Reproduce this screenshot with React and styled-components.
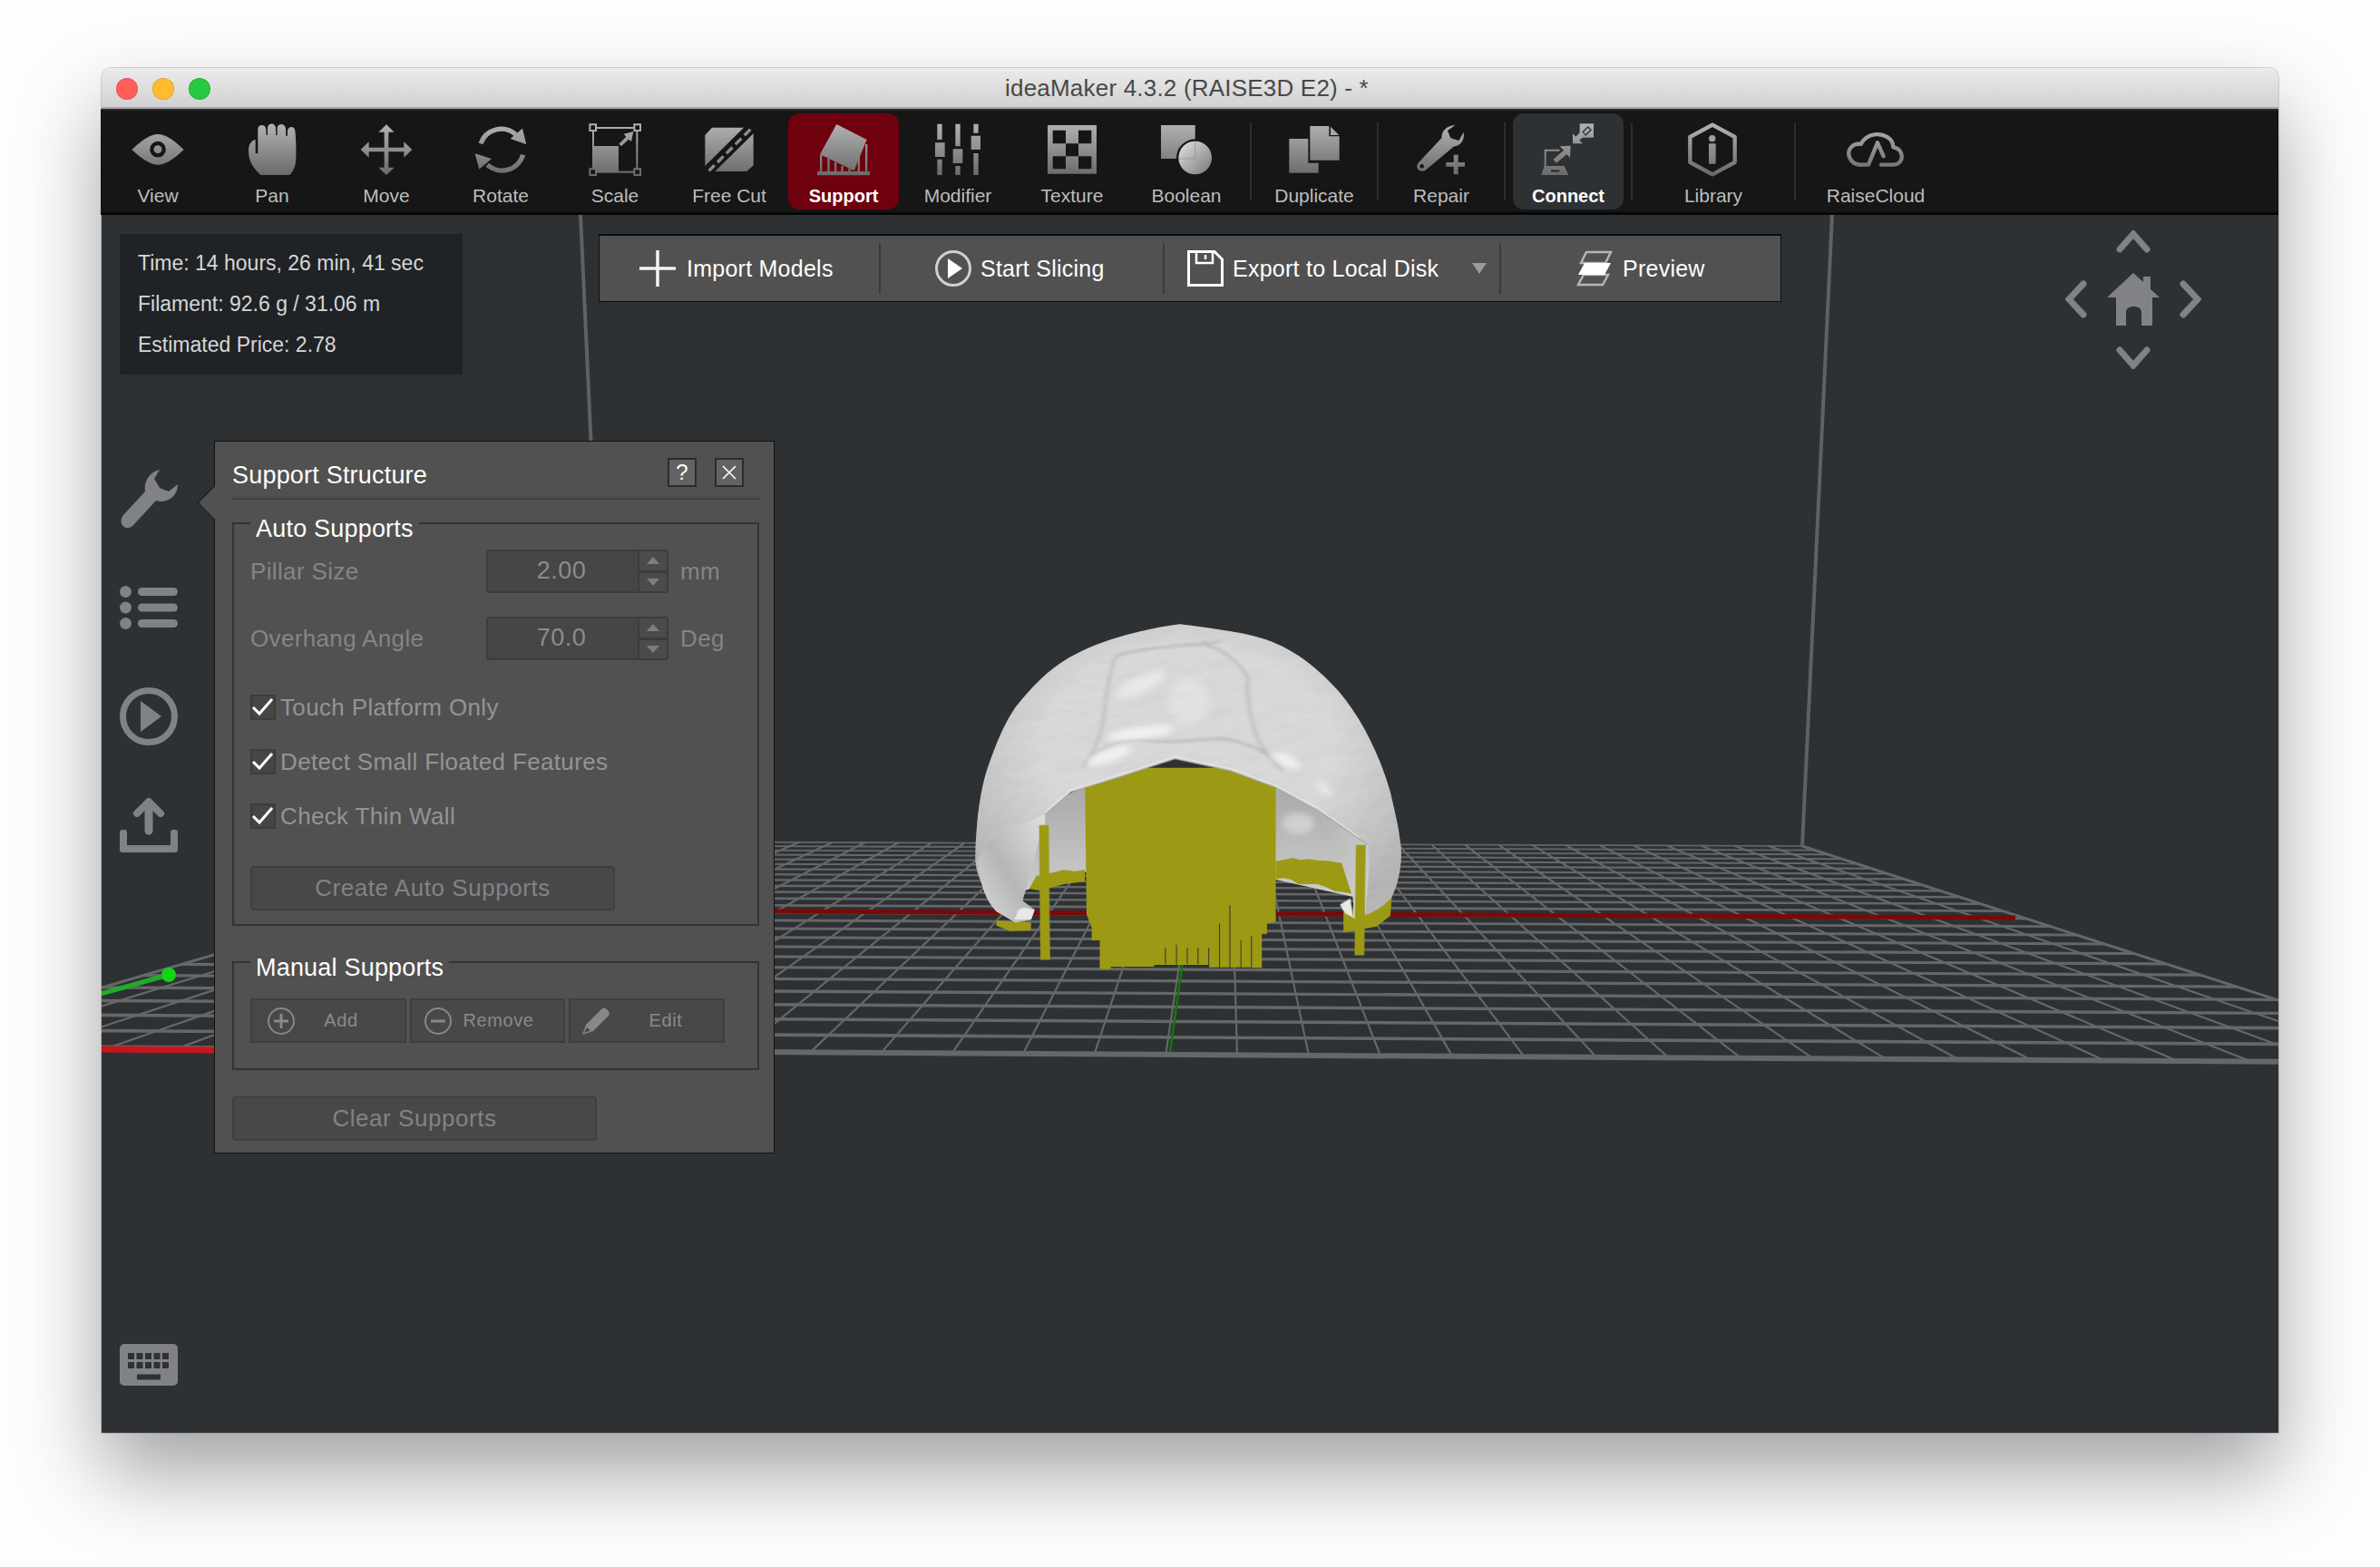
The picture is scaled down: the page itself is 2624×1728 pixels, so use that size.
import React from 'react'
import styled, { createGlobalStyle, css } from 'styled-components'

const FONT = `"Liberation Sans", Arial, sans-serif`

const GlobalStyle = createGlobalStyle`
  html, body { margin: 0; padding: 0; background: #fdfdfd; }
  body { width: 2624px; height: 1728px; overflow: hidden; font-family: ${FONT}; }
`

const Page = styled.div`
  padding: 75px 0 0 112px;
`

const Window = styled.div`
  width: 2400px;
  height: 1505px;
  display: flex;
  flex-direction: column;
  border-radius: 11px 11px 0 0;
  box-shadow: 0 0 0 1px rgba(90, 90, 90, 0.25), 0 44px 90px 0 rgba(0, 0, 0, 0.36);
`

const TitleBar = styled.div`
  height: 45px;
  flex: none;
  position: relative;
  display: flex;
  align-items: center;
  justify-content: center;
  padding: 2px 7px 0 0;
  border-radius: 11px 11px 0 0;
  border-bottom: 2px solid #a8a8a8;
  background: linear-gradient(#ebebeb, #d1d1d1);
  color: #484848;
  font-size: 26px;
  letter-spacing: 0.2px;
  box-sizing: border-box;
`

const Lights = styled.div`
  position: absolute;
  left: 16px;
  top: 11px;
  display: flex;
  gap: 16px;
`

const Light = styled.span`
  width: 24px;
  height: 24px;
  border-radius: 50%;
  background: ${p => p.$color};
  box-shadow: inset 0 0 0 1px rgba(0, 0, 0, 0.12);
`

const Toolbar = styled.div`
  height: 117px;
  flex: none;
  display: flex;
  align-items: center;
  box-sizing: border-box;
  margin-left: -1px;
  background: #161616;
  border-top: 2px solid #262626;
  border-bottom: 3px solid #060606;
`

const ToolCell = styled.div`
  width: ${p => p.$width}px;
  flex: none;
  display: flex;
  justify-content: center;
`

const ToolBtn = styled.div`
  width: 122px;
  height: 106px;
  box-sizing: border-box;
  padding-top: 10px;
  display: flex;
  flex-direction: column;
  align-items: center;
  border-radius: 12px;
  color: #bdbdbd;
  font-size: 21px;
  ${p => p.$tone === 'red' && css`
    background: #6f000e;
    color: #fff;
    font-size: 20px;
    font-weight: bold;
  `}
  ${p => p.$tone === 'dark' && css`
    background: #2e3134;
    color: #fff;
    font-size: 20px;
    font-weight: bold;
  `}
`

const ToolIcon = styled.svg`
  width: 64px;
  height: 60px;
  display: block;
`

const ToolLabel = styled.span`
  margin-top: 9px;
  line-height: 24px;
  white-space: nowrap;
`

const ToolSep = styled.div`
  width: 2px;
  height: 86px;
  flex: none;
  background: #2d2d2d;
  margin-left: ${p => p.$ml || 0}px;
`

const Viewport = styled.div`
  flex: 1;
  position: relative;
  overflow: hidden;
  background: #2e3134;
`

const Scene = styled.svg`
  position: absolute;
  inset: 0;
  width: 100%;
  height: 100%;
`

const InfoBox = styled.div`
  position: absolute;
  left: 20px;
  top: 21px;
  width: 378px;
  height: 155px;
  box-sizing: border-box;
  padding: 10px 0 0 20px;
  background: #202326;
  color: #d6d6d6;
  font-size: 23px;
`

const InfoLine = styled.div`
  height: 45px;
  line-height: 45px;
`

const ActionBar = styled.div`
  position: absolute;
  left: 548px;
  top: 21px;
  width: 1304px;
  height: 75px;
  box-sizing: border-box;
  display: flex;
  align-items: center;
  background: #515151;
  border: 1px solid #0c0c0c;
  border-top-width: 2px;
  color: #fff;
  font-size: 25px;
  letter-spacing: 0.25px;
`

const ActionCell = styled.div`
  width: ${p => p.$width}px;
  height: 56px;
  box-sizing: border-box;
  flex: none;
  display: flex;
  align-items: center;
  gap: ${p => p.$gap}px;
  padding-left: ${p => p.$pad}px;
  ${p => p.$sep && 'border-left: 2px solid #3a3a3a;'}
`

const ActionIcon = styled.svg`
  width: 40px;
  height: 40px;
  flex: none;
`

const DropArrow = styled.span`
  margin-left: auto;
  margin-right: 14px;
  width: 0;
  height: 0;
  border-left: 8px solid transparent;
  border-right: 8px solid transparent;
  border-top: 12px solid #9a9a9a;
`

const SideIcons = styled.div`
  position: absolute;
  left: 20px;
  top: 281px;
  display: flex;
  flex-direction: column;
  gap: 64px;
`

const SideIcon = styled.svg`
  display: block;
  width: 64px;
  height: ${p => p.$h}px;
  margin-top: ${p => p.$mt || 0}px;
  fill: #808285;
`

const KeyboardIcon = styled.svg`
  position: absolute;
  left: 20px;
  bottom: 52px;
  width: 64px;
  height: 46px;
  display: block;
`

const NavPad = styled.svg`
  position: absolute;
  left: 2165px;
  top: 17px;
  width: 150px;
  height: 153px;
`

const Panel = styled.div`
  position: absolute;
  left: 124px;
  top: 249px;
  width: 618px;
  height: 786px;
  box-sizing: border-box;
  padding: 0 14px 0 19px;
  background: #515151;
  border: 1px solid #101010;
  color: #fff;
  font-size: 26px;

  &::before {
    content: '';
    position: absolute;
    left: -14px;
    top: 54px;
    width: 26px;
    height: 26px;
    background: #515151;
    border-left: 1px solid #101010;
    border-bottom: 1px solid #101010;
    transform: rotate(45deg);
  }
`

const PanelHeader = styled.div`
  height: 64px;
  box-sizing: border-box;
  padding: 6px 19px 0 0;
  display: flex;
  align-items: center;
  gap: 20px;
  border-bottom: 2px solid #404040;
`

const PanelTitle = styled.span`
  margin: 6px auto 0 0;
  font-size: 27px;
  letter-spacing: 0.2px;
`

const HeadBtn = styled.span`
  width: 32px;
  height: 32px;
  box-sizing: border-box;
  display: flex;
  align-items: center;
  justify-content: center;
  border: 2px solid #2c2c2c;
  background: #636363;
  font-size: 24px;
`

const Group = styled.div`
  position: relative;
  width: 581px;
  height: ${p => p.$h}px;
  margin-top: ${p => p.$mt}px;
  box-sizing: border-box;
  padding: ${p => p.$pt}px 0 0 18px;
  border: 2px solid #333;
`

const Legend = styled.span`
  position: absolute;
  left: 18px;
  top: -9px;
  padding: 0 6px;
  line-height: 28px;
  background: #515151;
  font-size: 27px;
  letter-spacing: 0.2px;
  white-space: nowrap;
`

const FieldRow = styled.div`
  height: 48px;
  display: flex;
  align-items: center;
  margin-bottom: 26px;
  color: #858585;
  letter-spacing: 0.35px;
`

const FieldLabel = styled.span`
  width: 260px;
  flex: none;
`

const SpinBox = styled.div`
  width: 201px;
  height: 48px;
  box-sizing: border-box;
  display: flex;
  background: #464646;
  border: 2px solid #3c3c3c;
  border-radius: 4px;
  color: #8c8c8c;
  font-size: 27px;
  letter-spacing: 0.5px;
`

const SpinValue = styled.span`
  flex: 1;
  padding-right: 3px;
  text-align: center;
  line-height: 42px;
`

const SpinArrows = styled.div`
  width: 30px;
  display: flex;
  flex-direction: column;
  border-left: 2px solid #3c3c3c;
`

const SpinArrow = styled.span`
  flex: 1;
  display: flex;
  align-items: center;
  justify-content: center;
  background: #4b4b4b;
  & + & { border-top: 3px solid #3c3c3c; }

  &::after {
    content: '';
    border-left: 7px solid transparent;
    border-right: 7px solid transparent;
    ${p => p.$down ? 'border-top: 8px solid #7e7e7e;' : 'border-bottom: 8px solid #7e7e7e;'}
  }
`

const Unit = styled.span`
  margin-left: 13px;
`

const CheckRow = styled.div`
  height: 28px;
  display: flex;
  align-items: center;
  gap: 5px;
  margin-top: ${p => p.$mt}px;
  color: #949494;
  letter-spacing: 0.35px;
`

const CheckBox = styled.span`
  width: 28px;
  height: 28px;
  box-sizing: border-box;
  flex: none;
  background: #464646;
  border: 2px solid #3c3c3c;
  display: flex;
  align-items: center;
  justify-content: center;
`

const DimButton = styled.div`
  width: ${p => p.$w}px;
  height: 49px;
  box-sizing: border-box;
  margin-top: ${p => p.$mt}px;
  display: flex;
  align-items: center;
  justify-content: center;
  background: #484848;
  border: 2px solid #3e3e3e;
  border-radius: 4px;
  color: #838383;
  letter-spacing: 0.55px;
`

const ManualRow = styled.div`
  display: flex;
  gap: 4px;
`

const ManualBtn = styled.div`
  width: ${p => p.$w}px;
  height: 49px;
  box-sizing: border-box;
  display: flex;
  align-items: center;
  padding: 0 ${p => p.$pr}px 0 ${p => p.$pl}px;
  background: #484848;
  border: 2px solid #3e3e3e;
  color: #8a8a8a;
  font-size: 20px;
  letter-spacing: 0.6px;
`

const ManualText = styled.span`
  flex: 1;
  text-align: center;
`

const ManualIcon = styled.svg`
  width: 32px;
  height: 32px;
  flex: none;
`

const G = 'url(#toolGrad)'

const Eye = () => (
  <>
    <path fill={G} d="M46 108C85 72 110 57 132 57C155 57 180 72 218 108C180 144 155 158 132 158C110 158 85 144 46 108Z" />
    <circle cx="132" cy="107" r="20" fill="none" stroke="#161616" strokeWidth="13" />
  </>
)
const Hand = () => (
  <path fill={G} d="M472 192C450 170 432 150 432 110C432 90 442 78 455 75L455 120L463 120L463 40C463 23 488 23 490 40L491 60L495 60L495 35C497 18 520 18 522 35L523 60L527 60L527 35C530 20 553 20 555 38L556 62L561 62L561 45C564 29 584 29 586 45C590 80 590 130 588 150C585 170 578 182 568 192Z" />
)
const Move = () => (
  <path fill={G} d="M888 25L914 50L895 50L895 101L946 101L946 82L973 108L946 134L946 115L895 115L895 167L914 167L888 192L862 167L881 167L881 115L830 115L830 134L803 108L830 82L830 101L881 101L881 50L862 50Z" />
)
const Rotate = () => (
  <>
    <path fill="none" stroke={G} strokeWidth="16" d="M1200 88A72 72 0 0 1 1316 58M1340 125A72 72 0 0 1 1222 158" />
    <path fill={G} d="M1338 38L1351 91L1298 72ZM1181 121L1236 138L1195 173Z" />
  </>
)
const Scale = () => (
  <>
    <rect x="72" y="36" width="145" height="146" fill="none" stroke={G} strokeWidth="6" />
    <rect x="72" y="96" width="84" height="84" fill={G} />
    <path fill="#161616" stroke={G} strokeWidth="6" d="M61 25h20v20h-20zM208 25h20v20h-20zM61 172h20v20h-20zM208 172h20v20h-20z" />
    <path fill={G} d="M205 48L198 82L189 74L165 97L157 89L181 65L173 56Z" />
  </>
)
const FreeCut = () => (
  <>
    <path fill={G} d="M442 60L465 35L570 35L442 162ZM602 55L602 160L580 180L475 180Z" />
    <path fill="none" stroke="#8c8c8c" strokeWidth="10" strokeDasharray="28 14" d="M592 41L455 178" />
  </>
)
const Support = () => (
  <>
    <path fill={G} d="M877 24L977 75L935 178L822 124Z" />
    <path fill={G} d="M813 180H987V193H813ZM822 126h7v55h-7zM847 138h7v43h-7zM870 150h7v31h-7zM892 162h7v19h-7zM916 170h7v11h-7zM947 130h7v51h-7zM972 90h7v91h-7z" />
  </>
)
const Modifier = () => (
  <path fill={G} d="M1210 23h16v52h-16zM1203 85h32v47h-32zM1210 140h16v52h-16zM1270 23h16v74h-16zM1262 106h32v47h-32zM1270 162h16v30h-16zM1330 23h16v30h-16zM1322 62h31v46h-31zM1330 120h16v72h-16z" />
)
const Texture = () => (
  <path fill={G} fillRule="evenodd" d="M75 27H237V188H75ZM92 44V88H135V44ZM177 44V88H220V44ZM135 88V130H177V88ZM92 130V172H135V130ZM177 130V172H220V130Z" />
)
const Boolean3D = () => (
  <>
    <rect x="450" y="27" width="113" height="111" fill={G} />
    <circle cx="563" cy="135" r="62" fill="#161616" />
    <circle cx="563" cy="135" r="55" fill="url(#sphereGrad)" />
    <path fill="none" stroke="#6a6a6a" strokeWidth="2" strokeDasharray="4 3" d="M563 82V138H510" />
  </>
)
const Duplicate = () => (
  <>
    <path fill={G} d="M874 72L937 72L937 152L971 152L971 185L874 185Z" />
    <path fill={G} d="M943 30L1006 30L1006 64L1040 64L1040 143L943 143Z" />
    <path fill="#a8a8a8" d="M1011 32L1039 60L1011 60Z" />
  </>
)
const Repair = () => (
  <>
    <path fill={G} fillRule="evenodd" d="M1303 150L1378 70C1378 45 1393 30 1423 27L1398 45L1408 70L1435 78L1451 50C1455 75 1443 95 1418 98L1323 178C1303 185 1288 165 1303 150ZM1313 156a7 7 0 1 0 .1 0Z" />
    <path fill={G} d="M1418 125h15v25h22v14h-22v26h-15v-26h-25v-14h25z" />
  </>
)
const Connect = () => (
  <>
    <rect x="335" y="22" width="46" height="46" fill={G} />
    <path fill="none" stroke="#2e3134" strokeWidth="4" d="M345 50L362 33L372 43L355 60Z" />
    <path fill={G} d="M312 88L312 55L322 65L340 47L352 59L334 78L345 88Z" />
    <path fill="none" stroke={G} strokeWidth="6" d="M268 110H221V165" />
    <path fill={G} d="M218 162H284L298 192H208ZM305 95L303 135L292 124L258 152L247 141L282 110L269 97Z" />
    <path fill="#2e3134" d="M240 175h28v7h-28z" />
  </>
)
const Library = () => (
  <>
    <path fill="none" stroke={G} strokeWidth="13" strokeLinejoin="round" d="M774 26L848 66V150L774 190L700 150V66Z" />
    <circle cx="773" cy="71" r="11" fill={G} />
    <rect x="762" y="88" width="23" height="67" rx="3" fill={G} />
  </>
)
const Cloud = () => (
  <path fill="none" stroke={G} strokeWidth="13" strokeLinecap="round" strokeLinejoin="round" d="M1332 158L1372 158C1410 158 1410 105 1372 100C1372 70 1340 55 1310 58C1290 60 1272 75 1265 90C1240 85 1222 105 1225 125C1228 145 1245 160 1270 158L1290 158L1320 85L1340 130" />
)

const TOOLS = [
  { label: 'View', vx: 36, Icon: Eye, width: 126 },
  { label: 'Pan', vx: 414, Icon: Hand, width: 126 },
  { label: 'Move', vx: 792, Icon: Move, width: 126 },
  { label: 'Rotate', vx: 1170, Icon: Rotate, width: 126 },
  { label: 'Scale', vx: 48, Icon: Scale, width: 126 },
  { label: 'Free Cut', vx: 426, Icon: FreeCut, width: 126 },
  { label: 'Support', vx: 804, Icon: Support, width: 126, tone: 'red' },
  { label: 'Modifier', vx: 1182, Icon: Modifier, width: 126 },
  { label: 'Texture', vx: 60, Icon: Texture, width: 126 },
  { label: 'Boolean', vx: 438, Icon: Boolean3D, width: 126 },
  { sep: true, ml: 7 },
  { label: 'Duplicate', vx: 861, Icon: Duplicate, width: 138 },
  { sep: true },
  { label: 'Repair', vx: 1281, Icon: Repair, width: 138 },
  { sep: true },
  { label: 'Connect', vx: 201, Icon: Connect, width: 138, tone: 'dark' },
  { sep: true },
  { label: 'Library', vx: 681, Icon: Library, width: 178 },
  { sep: true },
  { label: 'RaiseCloud', vx: 1218, Icon: Cloud, width: 176 },
]

// perspective of the print bed: unit square -> floor corners
const makeProject = ([[x0, y0], [x1, y1], [x2, y2], [x3, y3]]) => {
  const dx1 = x1 - x2, dx2 = x3 - x2, sx = x0 - x1 + x2 - x3
  const dy1 = y1 - y2, dy2 = y3 - y2, sy = y0 - y1 + y2 - y3
  const den = dx1 * dy2 - dx2 * dy1
  const g = (sx * dy2 - dx2 * sy) / den
  const h = (dx1 * sy - sx * dy1) / den
  const a = x1 - x0 + g * x1, b = x3 - x0 + h * x3
  const d = y1 - y0 + g * y1, e = y3 - y0 + h * y3
  return (u, v) => {
    const w = g * u + h * v + 1
    return [(a * u + b * v + x0) / w, (d * u + e * v + y0) / w]
  }
}

const project = makeProject([[663, 928], [1987, 933], [2725, 1172], [-110, 1154]])
const COLS = 36
const ROWS = 25

const FloorGrid = () => {
  const lines = []
  for (let i = 0; i <= COLS; i++) {
    const [ax, ay] = project(i / COLS, 0)
    const [bx, by] = project(i / COLS, 1)
    lines.push(<line key={'c' + i} x1={ax} y1={ay} x2={bx} y2={by} strokeWidth={i === 0 || i === COLS ? 3 : 2.2} />)
  }
  for (let j = 0; j <= ROWS; j++) {
    const v = j / ROWS
    const [ax, ay] = project(0, v)
    const [bx, by] = project(1, v)
    const sw = j === ROWS ? 6 : 1.7 + v * 2
    lines.push(<line key={'r' + j} x1={ax} y1={ay} x2={bx} y2={by} strokeWidth={sw} />)
  }
  return <g stroke="#656768">{lines}</g>
}

const SHELL = 'M735 85C800 95 900 110 950 125C1040 150 1120 215 1190 305C1260 400 1310 520 1340 640C1352 700 1365 760 1368 800C1378 860 1365 940 1345 985C1325 1020 1280 1045 1240 1060L1232 1055C1240 1000 1225 930 1215 900C1205 860 1170 760 1130 700L1010 625L880 570L780 545L720 530L560 590L420 640L345 715L345 745C325 800 310 870 300 925L280 1000L315 1030L305 1062L260 1072L205 1035C185 1010 170 975 165 950C150 910 143 880 145 850C145 810 148 770 150 740C155 680 165 610 180 560C205 480 225 420 260 360C295 310 330 265 370 230C410 195 455 170 500 150C570 120 660 95 735 85Z'
const LEFT_FLAP = 'M150 870C165 820 200 785 250 760C290 742 325 725 345 715L345 745C325 800 310 870 300 925L280 1000L315 1030L305 1062L260 1072L205 1035C185 1010 170 975 165 950Z'
const RIGHT_FLAP = 'M1130 700C1180 735 1240 780 1272 812C1285 850 1275 960 1268 1040L1240 1060L1232 1055C1240 1000 1225 930 1215 900C1205 860 1170 760 1130 700Z'
const BLOCK = 'M460 560L1010 560V1070L985 1075V1110L970 1110V1222H940V1220H818V1212H660V1218H535V1226H503V1130H480V1090L465 1045Z'
const BANDS = 'M300 960L320 918L360 908L400 898L430 902L460 898V936L400 945L330 966ZM1010 870L1030 865L1060 858L1080 865L1105 862L1130 866L1160 868L1200 875L1228 976L1205 972L1180 968L1155 955L1130 945L1100 945L1075 945L1055 930L1030 925L1010 928ZM205 1065L305 1072V1098L245 1100L205 1082ZM1205 1040L1345 985L1340 1050L1300 1085L1205 1105Z'
const GAPS = [[692, 1155, 1210], [724, 1145, 1210], [755, 1155, 1210], [786, 1155, 1210], [817, 1155, 1212], [848, 1075, 1222], [878, 1015, 1222], [910, 1130, 1222], [940, 1115, 1222]]

const Skull = () => (
  <g transform="translate(1020 660) scale(0.3827 0.3333)">
    <path fill="url(#innerGrad)" d="M275 970L300 800L340 690L460 620L1010 610L1135 680L1245 900V990L1010 930L460 905Z" />
    <ellipse cx="1075" cy="745" rx="45" ry="35" fill="#d0d0d0" filter="url(#softer)" />
    <path fill="#9c9a14" d={BANDS} />
    <path fill="#9c9a14" d={BLOCK} />
    {GAPS.map(([x, y1, y2]) => <line key={x} x1={x} x2={x} y1={y1} y2={y2} stroke="#3f4030" strokeWidth="3" />)}
    <path fill="#dcdcdc" d={SHELL} filter="url(#bump)" />
    <path fill="url(#shellShade)" d={SHELL} />
    <path fill="url(#flapLeft)" d={LEFT_FLAP} />
    <path fill="url(#flapRight)" d={RIGHT_FLAP} />
    <g fill="none" stroke="#b2b2b2" strokeWidth="6" filter="url(#soft)">
      <path d="M550 190C530 240 525 300 520 340C515 400 510 470 455 560" />
      <path d="M930 262C925 320 935 400 960 470C980 510 1000 540 1030 570" />
      <path d="M550 190C600 170 680 160 800 150C850 165 905 205 930 262" />
      <path d="M460 545C500 490 560 470 620 468C700 480 770 470 850 462C900 470 950 490 985 515" />
      <path d="M800 140C810 150 830 150 850 140" />
    </g>
    <g fill="#f6f6f6" filter="url(#softer)">
      <ellipse cx="620" cy="285" rx="80" ry="26" transform="rotate(-30 620 285)" opacity=".55" />
      <ellipse cx="620" cy="445" rx="100" ry="20" transform="rotate(-8 620 445)" opacity=".85" />
      <ellipse cx="530" cy="520" rx="70" ry="22" transform="rotate(-22 530 520)" opacity=".8" />
      <ellipse cx="1040" cy="535" rx="45" ry="18" transform="rotate(30 1040 535)" opacity=".8" />
      <ellipse cx="760" cy="340" rx="60" ry="80" opacity=".3" />
      <ellipse cx="1150" cy="630" rx="30" ry="14" transform="rotate(40 1150 630)" opacity=".55" />
    </g>
    <path fill="none" stroke="#a2a2a2" strokeWidth="3" d="M345 715L420 640L560 590L720 530L780 545L880 570L1010 625L1130 700L1272 812" />
    <path fill="none" stroke="#ececec" strokeWidth="3" d="M345 708L420 633L560 583L720 524L780 538L880 563L1010 618L1130 693L1250 790" />
    <path fill="#e8e8e8" d="M285 1022L315 1030L305 1062L258 1062L268 1030ZM1195 1012L1225 992L1232 1055L1208 1040Z" />
    <path fill="#9c9a14" d="M328 750H356L360 1195H332ZM1241 815H1269L1265 1180H1237Z" />
  </g>
)

const SceneDefs = () => (
  <defs>
    <linearGradient id="innerGrad" x1="0" y1="0" x2="0" y2="1">
      <stop offset="0" stopColor="#a8a8a8" />
      <stop offset="1" stopColor="#cdcdcd" />
    </linearGradient>
    <linearGradient id="flapLeft" x1="1" y1="0" x2="0" y2="1">
      <stop offset="0" stopColor="#e0e0e0" />
      <stop offset=".55" stopColor="#b6b6b6" />
      <stop offset="1" stopColor="#dcdcdc" />
    </linearGradient>
    <linearGradient id="flapRight" x1="0" y1="0" x2="1" y2="1">
      <stop offset="0" stopColor="#b0b0b0" />
      <stop offset="1" stopColor="#d4d4d4" />
    </linearGradient>
    <radialGradient id="shellShade" cx=".5" cy=".42" r=".62">
      <stop offset=".55" stopColor="#000" stopOpacity="0" />
      <stop offset="1" stopColor="#000" stopOpacity=".16" />
    </radialGradient>
    <filter id="soft" x="-30%" y="-30%" width="160%" height="160%">
      <feGaussianBlur stdDeviation="5" />
    </filter>
    <filter id="softer" x="-40%" y="-40%" width="180%" height="180%">
      <feGaussianBlur stdDeviation="10" />
    </filter>
    <filter id="bump" x="0" y="0" width="100%" height="100%">
      <feTurbulence type="fractalNoise" baseFrequency="0.012 0.018" numOctaves="3" seed="7" result="n" />
      <feDiffuseLighting in="n" surfaceScale="2.4" lightingColor="#fff" result="l">
        <feDistantLight azimuth="240" elevation="72" />
      </feDiffuseLighting>
      <feBlend in="SourceGraphic" in2="l" mode="multiply" result="m" />
      <feComposite in="m" in2="SourceAlpha" operator="in" />
    </filter>
  </defs>
)

const Check = () => (
  <svg width="28" height="22" viewBox="0 0 28 22" style={{ overflow: 'visible' }}>
    <path d="M3 11L10 18L24 2" fill="none" stroke="#fff" strokeWidth="3" />
  </svg>
)

const Field = ({ label, value, unit }) => (
  <FieldRow>
    <FieldLabel>{label}</FieldLabel>
    <SpinBox>
      <SpinValue>{value}</SpinValue>
      <SpinArrows>
        <SpinArrow />
        <SpinArrow $down />
      </SpinArrows>
    </SpinBox>
    <Unit>{unit}</Unit>
  </FieldRow>
)

const CheckItem = ({ label, mt }) => (
  <CheckRow $mt={mt}>
    <CheckBox><Check /></CheckBox>
    {label}
  </CheckRow>
)

export default function App() {
  return (
    <Page>
      <GlobalStyle />
      <svg width="0" height="0" style={{ position: 'absolute' }}>
        <defs>
          <linearGradient id="toolGrad" gradientUnits="userSpaceOnUse" x1="0" y1="18" x2="0" y2="198">
            <stop offset="0" stopColor="#b4b4b4" />
            <stop offset="1" stopColor="#686868" />
          </linearGradient>
          <linearGradient id="sphereGrad" x1="0" y1="0" x2="1" y2="1">
            <stop offset="0" stopColor="#e4e4e4" />
            <stop offset="1" stopColor="#777" />
          </linearGradient>
        </defs>
      </svg>
      <Window>
        <TitleBar>
          <Lights>
            <Light $color="#ff5f57" />
            <Light $color="#febc2e" />
            <Light $color="#28c840" />
          </Lights>
          ideaMaker 4.3.2 (RAISE3D E2) - *
        </TitleBar>
        <Toolbar>
          {TOOLS.map((t, i) => t.sep ? <ToolSep key={i} $ml={t.ml} /> : (
            <ToolCell key={t.label} $width={t.width}>
              <ToolBtn $tone={t.tone}>
                <ToolIcon viewBox={`${t.vx} 18 192 180`}><t.Icon /></ToolIcon>
                <ToolLabel>{t.label}</ToolLabel>
              </ToolBtn>
            </ToolCell>
          ))}
        </Toolbar>
        <Viewport>
          <Scene viewBox="112 237 2400 1343" preserveAspectRatio="none">
            <SceneDefs />
            <FloorGrid />
            <line x1="640" y1="237" x2="672" y2="928" stroke="#5f6162" strokeWidth="4" />
            <line x1="2020" y1="237" x2="1987" y2="933" stroke="#5f6162" strokeWidth="4" />
            <line x1="854" y1="1005" x2="2222" y2="1012" stroke="#7d0808" strokeWidth="5" />
            <line x1="1290" y1="1160" x2="1304" y2="1060" stroke="#0d7a0d" strokeWidth="2.5" />
            <line x1="111" y1="1157" x2="240" y2="1158" stroke="#c8161c" strokeWidth="7" />
            <line x1="111" y1="1096" x2="186" y2="1075" stroke="#1fae2a" strokeWidth="5" />
            <circle cx="186" cy="1075" r="8" fill="#14d414" />
            <Skull />
          </Scene>

          <InfoBox>
            <InfoLine>Time: 14 hours, 26 min, 41 sec</InfoLine>
            <InfoLine>Filament: 92.6 g / 31.06 m</InfoLine>
            <InfoLine>Estimated Price: 2.78</InfoLine>
          </InfoBox>

          <ActionBar>
            <ActionCell $width={308} $pad={44} $gap={12}>
              <ActionIcon viewBox="0 0 40 40">
                <path d="M20 0V40M0 20H40" stroke="#f4f4f4" strokeWidth="3.5" />
              </ActionIcon>
              Import Models
            </ActionCell>
            <ActionCell $sep $width={313} $pad={60} $gap={10}>
              <ActionIcon viewBox="0 0 40 40">
                <circle cx="20" cy="20" r="18.5" fill="none" stroke="#d0d0d0" strokeWidth="3" />
                <path d="M14 9L30 20L14 31Z" fill="#fff" />
              </ActionIcon>
              Start Slicing
            </ActionCell>
            <ActionCell $sep $width={371} $pad={25} $gap={10}>
              <ActionIcon viewBox="0 0 40 40">
                <path d="M1.5 1.5H30L38.5 10V38.5H1.5Z" fill="none" stroke="#fff" strokeWidth="3" />
                <path d="M10 2V14H28V2M20 5V10" fill="none" stroke="#fff" strokeWidth="2.5" />
              </ActionIcon>
              Export to Local Disk
              <DropArrow />
            </ActionCell>
            <ActionCell $sep $width={309} $pad={83} $gap={11}>
              <ActionIcon viewBox="0 0 40 40">
                <path d="M11 2H38L32 14H5ZM8 27H35L29 38H2Z" fill="none" stroke="#b5b5b5" strokeWidth="2.5" />
                <path d="M9 14H38L31 27H2Z" fill="#fff" />
              </ActionIcon>
              Preview
            </ActionCell>
          </ActionBar>

          <SideIcons>
            <SideIcon $h={64} viewBox="0 0 64 64">
              <path d="M44 0C34 2 26 12 28 24L4 50C-1 56 2 64 9 64C12 64 14 62 16 60L40 34C54 38 64 28 64 16L54 24L44 20L38 10Z" />
            </SideIcon>
            <SideIcon $h={48} viewBox="0 0 64 48">
              <circle cx="6.5" cy="6.5" r="6.5" />
              <circle cx="6.5" cy="24" r="6.5" />
              <circle cx="6.5" cy="41.5" r="6.5" />
              <rect x="20" y="2" width="44" height="9" rx="4.5" />
              <rect x="20" y="19.5" width="44" height="9" rx="4.5" />
              <rect x="20" y="37" width="44" height="9" rx="4.5" />
            </SideIcon>
            <SideIcon $h={64} viewBox="0 0 64 64">
              <circle cx="32" cy="32" r="28.5" fill="none" stroke="#808285" strokeWidth="7" />
              <path d="M23 15L46 32L23 49Z" />
            </SideIcon>
            <SideIcon $h={60} $mt={-6} viewBox="0 0 64 60">
              <path d="M32 6V36" stroke="#808285" strokeWidth="9" strokeLinecap="round" fill="none" />
              <path d="M19 17L32 4L45 17" stroke="#808285" strokeWidth="8" strokeLinecap="round" strokeLinejoin="round" fill="none" />
              <path d="M0 38C0 36 1 35 3 35H6C7 35 8 36 8 38V52H56V38C56 36 57 35 59 35H61C63 35 64 36 64 38V57C64 59 63 60 61 60H3C1 60 0 59 0 57Z" />
            </SideIcon>
          </SideIcons>

          <KeyboardIcon viewBox="0 0 64 46">
            <rect width="64" height="46" rx="5" fill="#808285" />
            <path fill="#2e3134" d="M9 10h7v7H9zM18.500 10h7v7h-7zM28 10h7v7h-7zM37.500 10h7v7h-7zM47 10h7v7h-7zM9 20h7v7H9zM18.500 20h7v7h-7zM28 20h7v7h-7zM37.500 20h7v7h-7zM47 20h7v7h-7zM19 33.500h26v6H19z" />
          </KeyboardIcon>

          <NavPad viewBox="0 0 150 153">
            <path fill="none" stroke="#808285" strokeWidth="7" strokeLinecap="round" strokeLinejoin="miter" d="M60 21L75 4L90 21M20 59L4 76L20 93M130 59L146 76L130 93M60 132L75 149L90 132" />
            <path fill="#808285" d="M75 47L86 57V51H94V65L104 74H96V105H84V90C84 82 67 82 67 90V105H56V74H46Z" />
          </NavPad>

          <Panel>
            <PanelHeader>
              <PanelTitle>Support Structure</PanelTitle>
              <HeadBtn>?</HeadBtn>
              <HeadBtn>
                <svg width="18" height="18" viewBox="0 0 18 18">
                  <path d="M2 2L16 16M16 2L2 16" stroke="#fff" strokeWidth="1.6" />
                </svg>
              </HeadBtn>
            </PanelHeader>

            <Group $h={445} $mt={25} $pt={28}>
              <Legend>Auto Supports</Legend>
              <Field label="Pillar Size" value="2.00" unit="mm" />
              <Field label="Overhang Angle" value="70.0" unit="Deg" />
              <CheckItem label="Touch Platform Only" mt={38} />
              <CheckItem label="Detect Small Floated Features" mt={32} />
              <CheckItem label="Check Thin Wall" mt={32} />
              <DimButton $w={402} $mt={41}>Create Auto Supports</DimButton>
            </Group>

            <Group $h={120} $mt={39} $pt={39}>
              <Legend>Manual Supports</Legend>
              <ManualRow>
                <ManualBtn $w={172} $pl={16} $pr={20}>
                  <ManualIcon viewBox="0 0 32 32">
                    <circle cx="16" cy="16" r="14" fill="none" stroke="#888" strokeWidth="2" />
                    <path d="M16 8V24M8 16H24" stroke="#888" strokeWidth="3" />
                  </ManualIcon>
                  <ManualText>Add</ManualText>
                </ManualBtn>
                <ManualBtn $w={171} $pl={13} $pr={21}>
                  <ManualIcon viewBox="0 0 32 32">
                    <circle cx="16" cy="16" r="14" fill="none" stroke="#888" strokeWidth="2" />
                    <path d="M8 16H24" stroke="#888" strokeWidth="3" />
                  </ManualIcon>
                  <ManualText>Remove</ManualText>
                </ManualBtn>
                <ManualBtn $w={172} $pl={12} $pr={2}>
                  <ManualIcon viewBox="0 0 32 32">
                    <path fill="#888" d="M1 31L5 20L22 3C24 1 26 1 28 3L30 5C31 7 31 8 30 10L13 27ZM3 29L10 26.500L6 23Z" />
                  </ManualIcon>
                  <ManualText>Edit</ManualText>
                </ManualBtn>
              </ManualRow>
            </Group>

            <DimButton $w={402} $mt={29}>Clear Supports</DimButton>
          </Panel>
        </Viewport>
      </Window>
    </Page>
  )
}
